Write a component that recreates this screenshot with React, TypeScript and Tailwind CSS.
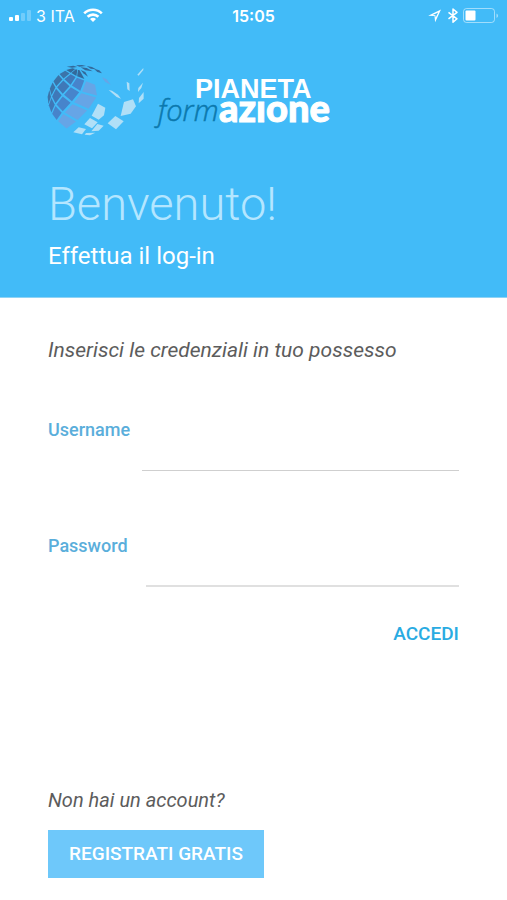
import React, { useState } from 'react';

// Lines of the globe mesh, each running from the pole down to the left
const mesh = [
  [[110, 36], [88, 42], [68, 54], [50, 76], [40, 98], [34, 122]],
  [[120, 38], [104, 52], [82, 70], [60, 94], [46, 122], [37, 148]],
  [[125, 40], [122, 62], [104, 90], [80, 117], [58, 146], [46, 174]],
  [[130, 40], [148, 72], [134, 108], [108, 140], [80, 170], [62, 196]],
  [[142, 42], [180, 84], [187, 123], [160, 163], [126, 197], [92, 222]],
];

const bandColors = ['#3b74aa', '#3f78b8', '#4784cb', '#66a5e6'];

const globeTiles = bandColors.flatMap((color, band) =>
  [0, 1, 2, 3, 4]
    .filter((row) => band < 3 || row > 0)
    .map((row) => {
      const corners = [mesh[band][row], mesh[band + 1][row], mesh[band + 1][row + 1], mesh[band][row + 1]];
      const cx = corners.reduce((sum, c) => sum + c[0], 0) / 4;
      const cy = corners.reduce((sum, c) => sum + c[1], 0) / 4;
      const points = corners.map((c) => `${cx + (c[0] - cx) * 0.84},${cy + (c[1] - cy) * 0.84}`).join(' ');
      return { points, fill: row === 0 ? '#33699a' : color };
    })
);

const poleTiles = [
  '92,32 112,29 124,33 108,35',
  '120,28 138,27 150,30 130,32',
  '134,34 152,36 170,46 148,43',
  '152,30 168,33 180,40 164,38',
  '134,42 148,48 156,62 142,52',
  '174,38 190,43 198,52 184,48',
];

const flyingTiles = [
  '186,143 208,155 204,178 188,191 167,179',
  '162,186 185,199 168,217 145,205',
  '128,214 150,219 138,235 112,229',
  '184,204 203,209 188,224 166,226',
  '150,231 178,230 162,238 146,236',
  '218,102 228,104 246,116 255,128 242,123',
  '264,138 291,130 300,151 284,173 254,180',
  '238,180 263,196 240,220 215,202',
  '272,77 280,82 281,105 274,100',
  '304,56 322,36 322,42 308,59',
  '307,96 321,80 316,96 306,108',
  '309,126 323,108 323,128 308,142',
];

const SignalIcon = () => (
  <svg className="h-4 w-6" viewBox="0 0 24 16" fill="white" aria-hidden="true">
    <rect x="1" y="9" width="4" height="4" rx="1" />
    <rect x="7" y="7" width="4" height="6" rx="1" />
    <rect x="13" y="5" width="4" height="8" rx="1" opacity="0.25" />
    <rect x="19" y="2" width="4" height="11" rx="1" opacity="0.25" />
  </svg>
);

const WifiIcon = () => (
  <svg className="ml-1 h-4 w-5" viewBox="0 0 20 16" fill="none" stroke="white" strokeWidth="2.6" aria-hidden="true">
    <path d="M1.2 5.3a12.5 12.5 0 0 1 17.6 0" />
    <path d="M4.6 8.8a7.7 7.7 0 0 1 10.8 0" />
    <path d="M10 14.1 7 11.1a4.3 4.3 0 0 1 6 0z" fill="white" stroke="none" />
  </svg>
);

const LocationIcon = () => (
  <svg className="h-4 w-4" viewBox="0 0 16 16" aria-hidden="true">
    <path
      d="M14 1.6 1.2 7.8l6.3.3.6 6.1zM11.2 4.6 8.7 9.6l-.3-2.4-2.6-.2z"
      fill="white"
      fillRule="evenodd"
    />
  </svg>
);

const BluetoothIcon = () => (
  <svg className="h-4 w-3" viewBox="0 0 12 16" fill="none" stroke="white" strokeWidth="1.5" strokeLinejoin="round" aria-hidden="true">
    <path d="M1.5 4.3 10 10.8l-4 3.4V1L10 4.4l-8.5 6.5" />
  </svg>
);

const BatteryIcon = () => (
  <svg className="h-4 w-9" viewBox="0 0 36 16" fill="none" aria-hidden="true">
    <rect x="0.5" y="0.5" width="31" height="14" rx="3" stroke="white" strokeOpacity="0.5" />
    <rect x="2.5" y="2.5" width="10" height="10" rx="1" fill="white" />
    <path d="M33.5 5.5v4.5c2-.8 2-3.7 0-4.5z" fill="white" fillOpacity="0.5" />
  </svg>
);

const Logo = () => (
  <svg className="h-20 w-74" viewBox="0 0 296 80" role="img" aria-label="Pianeta Formazione">
    <g transform="translate(-8 -4) scale(0.3333)">
      {globeTiles.map((tile) => (
        <polygon key={tile.points} points={tile.points} fill={tile.fill} />
      ))}
      {poleTiles.map((points) => (
        <polygon key={points} points={points} fill="#33699a" />
      ))}
      <polygon points="198,64 212,70 224,86 208,78" fill="#66a5e6" />
      {flyingTiles.map((points) => (
        <polygon key={points} points={points} fill="#b0dff7" />
      ))}
    </g>
    <text x="151" y="38" fontFamily="Liberation Sans, sans-serif" fontWeight="700" fontSize="27" fill="white">
      PIANETA
    </text>
    <text x="114" y="61" fontFamily="Open Sans, sans-serif" fontStyle="italic" fontWeight="300" fontSize="29" fill="#0b78ad" stroke="#0b78ad" strokeWidth="0.5">
      form
    </text>
    <text x="175" y="62" fontFamily="Lato, sans-serif" fontWeight="900" fontSize="38" fill="white" stroke="white">
      azıone
    </text>
  </svg>
);

const App = () => {
  const [username, setUsername] = useState('');
  const [password, setPassword] = useState('');

  return (
    <div className="min-h-screen bg-white font-[Roboto,sans-serif]">
      <header className="bg-[#42bbf8] border-b border-[#8fd3f5] pb-[25px]">
        {/* Status bar */}
        <div className="grid grid-cols-3 items-center h-8 px-2 text-base leading-5 text-white font-[Inter,sans-serif]">
          <div className="flex items-center gap-1">
            <SignalIcon />
            <span>3 ITA</span>
            <WifiIcon />
          </div>
          <span className="text-center font-semibold">15:05</span>
          <div className="flex items-center justify-end gap-1">
            <LocationIcon />
            <BluetoothIcon />
            <BatteryIcon />
          </div>
        </div>

        <div className="px-12">
          <div className="pt-7 -ml-1">
            <Logo />
          </div>
          <h1 className="mt-9 text-[47px] leading-14 font-light text-[#b4e6ff]">Benvenuto!</h1>
          <p className="mt-2 text-2xl leading-8 text-white">Effettua il log-in</p>
        </div>
      </header>

      <main className="px-12">
        <form onSubmit={(e) => e.preventDefault()}>
          <p className="pt-9 text-[21px] leading-8 italic text-[#5c5c5c]">Inserisci le credenziali in tuo possesso</p>

          <div className="mt-13 flex items-start gap-3">
            <label htmlFor="username" className="text-lg leading-6 font-medium text-[#5aaedb]">
              Username
            </label>
            <input
              id="username"
              type="text"
              value={username}
              onChange={(e) => setUsername(e.target.value)}
              className="h-[53px] min-w-0 flex-1 border-b border-[#cfcfcf] text-lg outline-none"
            />
          </div>

          <div className="mt-[63px] flex items-start gap-[18px]">
            <label htmlFor="password" className="text-lg leading-6 font-medium text-[#5aaedb]">
              Password
            </label>
            <input
              id="password"
              type="password"
              value={password}
              onChange={(e) => setPassword(e.target.value)}
              className="h-[53px] min-w-0 flex-1 border-b-2 border-[#e0e0e0] text-lg outline-none"
            />
          </div>

          <div className="mt-[33px] flex justify-end">
            <button type="submit" className="text-[19px] leading-7 font-medium text-[#29abe2]">
              ACCEDI
            </button>
          </div>
        </form>

        <div className="mt-34 pb-5">
          <p className="text-xl leading-8 italic text-[#5c5c5c]">Non hai un account?</p>
          <button type="button" className="mt-[14px] h-12 px-[21px] bg-[#6ec8fa] text-[19px] font-medium text-white">
            REGISTRATI GRATIS
          </button>
        </div>
      </main>
    </div>
  );
};

export default App;
